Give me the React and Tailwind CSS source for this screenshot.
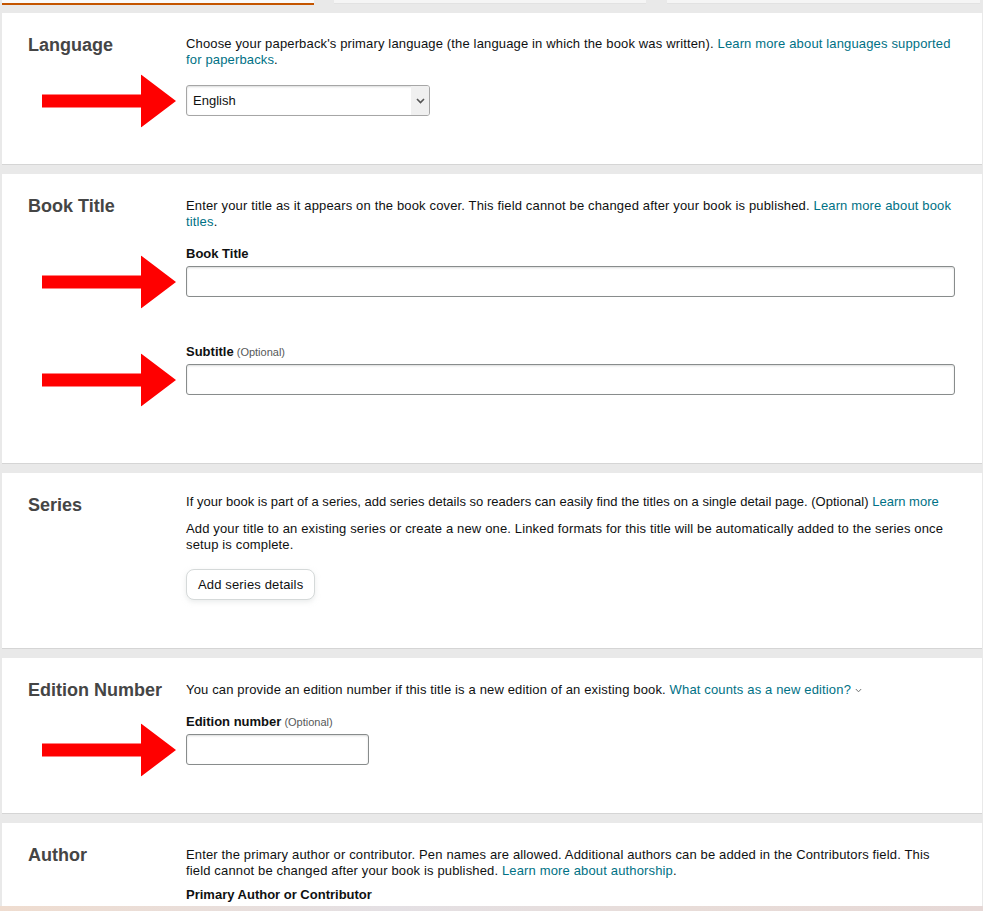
import React from "react";

const FONT = { fontFamily: '"Liberation Sans", Arial, sans-serif' };

function Arrow() {
  return (
    <svg
      className="absolute right-full top-1/2 mr-[10px] -translate-y-1/2"
      width="134"
      height="53"
      viewBox="0 0 134 53"
    >
      <polygon points="0,20 99,20 99,0 134,26.5 99,53 99,33 0,33" fill="#ff0000" />
    </svg>
  );
}

function Card({ title, children, pt = "pt-[23px]", pb = "pb-[48px]" }) {
  return (
    <div className={`ml-[2px] w-[980px] bg-white border-b border-[#d5d5d5] flex pl-[26px] pr-[27px] ${pb}`}>
      <div className="w-[158px] shrink-0 pt-[23px]">
        <h2 className="text-[18px] leading-[18px] font-bold text-[#454545]">{title}</h2>
      </div>
      <div className={`flex-1 text-[13px] leading-[16px] tracking-[0.15px] text-[#0f1111] ${pt}`}>{children}</div>
    </div>
  );
}

const Link = ({ children }) => <span className="text-[#007185]">{children}</span>;

const Label = ({ children, optional }) => (
  <div className="text-[13px] leading-[16px] font-bold tracking-normal text-[#0f1111]">
    {children}
    {optional && <span className="font-normal text-[11px] text-[#565959]"> (Optional)</span>}
  </div>
);

const inputCls =
  "block h-[31px] rounded-[3px] border border-[#888c8c] bg-white shadow-[inset_0_1px_2px_rgba(15,17,17,0.15)]";

export default function App() {
  return (
    <div className="relative w-[983px] h-[911px] overflow-hidden bg-[#e9e9e9] flex flex-col" style={FONT}>
      {/* tabs */}
      <div className="flex h-[5px] shrink-0 pl-[2px]">
        <div className="w-[312px] bg-[#fafafa] flex flex-col justify-end">
          <div className="h-[2px] bg-[#c45500]" />
        </div>
        <div className="w-[312px] ml-[20px] h-[4px] bg-[#f5f5f5] border-b border-[#e2e2e2]" />
        <div className="w-[313px] ml-[21px] h-[4px] bg-[#f5f5f5] border-b border-[#e2e2e2]" />
      </div>

      <div className="flex flex-col gap-[9px] mt-[8px]">
        {/* Language */}
        <Card title="Language">
          <p>
            Choose your paperback's primary language (the language in which the book was written).{" "}
            <Link>Learn more about languages supported for paperbacks</Link>.
          </p>
          <div className="relative mt-[17px] w-[244px]">
            <Arrow />
            <div className={`${inputCls} border-[#a6a6a6] flex items-stretch overflow-hidden shadow-[0_1px_0_rgba(255,255,255,0.5)]`}>
              <div className="flex-1 flex items-center pl-[6px] tracking-normal">English</div>
              <div className="w-[18px] bg-[#f0f0f0] flex items-center justify-center">
                <svg width="9" height="6" viewBox="0 0 9 6">
                  <path d="M1 1 L4.5 4.5 L8 1" fill="none" stroke="#555" strokeWidth="1.6" />
                </svg>
              </div>
            </div>
          </div>
        </Card>

        {/* Book Title */}
        <Card title="Book Title" pt="pt-[24px]" pb="pb-[68px]">
          <p>
            Enter your title as it appears on the book cover. This field cannot be changed after your book is published.{" "}
            <Link>Learn more about book titles</Link>.
          </p>
          <div className="mt-[16px]">
            <Label>Book Title</Label>
            <div className="relative mt-[4px]">
              <Arrow />
              <div className={`${inputCls} w-[769px]`} />
            </div>
          </div>
          <div className="mt-[47px]">
            <Label optional>Subtitle</Label>
            <div className="relative mt-[4px]">
              <Arrow />
              <div className={`${inputCls} w-[769px]`} />
            </div>
          </div>
        </Card>

        {/* Series */}
        <Card title="Series" pt="pt-[21px]">
          <p className="tracking-[0.02px] whitespace-nowrap">
            If your book is part of a series, add series details so readers can easily find the titles on a single detail page. (Optional){" "}
            <Link>Learn more</Link>
          </p>
          <p className="mt-[11px]">
            Add your title to an existing series or create a new one. Linked formats for this title will be automatically added to the series once setup is complete.
          </p>
          <button
            className="mt-[16px] h-[31px] px-[11px] rounded-[8px] border border-[#d5d9d9] bg-white shadow-[0_2px_5px_rgba(213,217,217,0.5)] text-[13px] text-[#0f1111]"
            style={FONT}
          >
            Add series details
          </button>
        </Card>

        {/* Edition Number */}
        <Card title="Edition Number" pt="pt-[24px]">
          <p className="flex items-center">
            <span>
              You can provide an edition number if this title is a new edition of an existing book.{" "}
              <Link>What counts as a new edition?</Link>
            </span>
            <svg className="ml-[4px] mt-[1px]" width="7" height="5" viewBox="0 0 7 5">
              <path d="M0.8 1 L3.5 3.8 L6.2 1" fill="none" stroke="#6f7373" strokeWidth="1" />
            </svg>
          </p>
          <div className="mt-[16px]">
            <Label optional>Edition number</Label>
            <div className="relative mt-[4px] w-[183px]">
              <Arrow />
              <div className={`${inputCls} w-[183px]`} />
            </div>
          </div>
        </Card>

        {/* Author */}
        <Card title="Author" pt="pt-[24px]" pb="pb-[20px]">
          <p>
            Enter the primary author or contributor. Pen names are allowed. Additional authors can be added in the Contributors field. This field cannot be changed after your book is published.{" "}
            <Link>Learn more about authorship</Link>.
          </p>
          <div className="mt-[8px]">
            <Label>Primary Author or Contributor</Label>
          </div>
        </Card>
      </div>

      <div className="absolute left-0 top-[906px] w-[983px] h-[5px] bg-[linear-gradient(90deg,#efdccf,#e4e0e4_40%,#e8dcd8_70%,#e6d8d6)]" />
    </div>
  );
}
